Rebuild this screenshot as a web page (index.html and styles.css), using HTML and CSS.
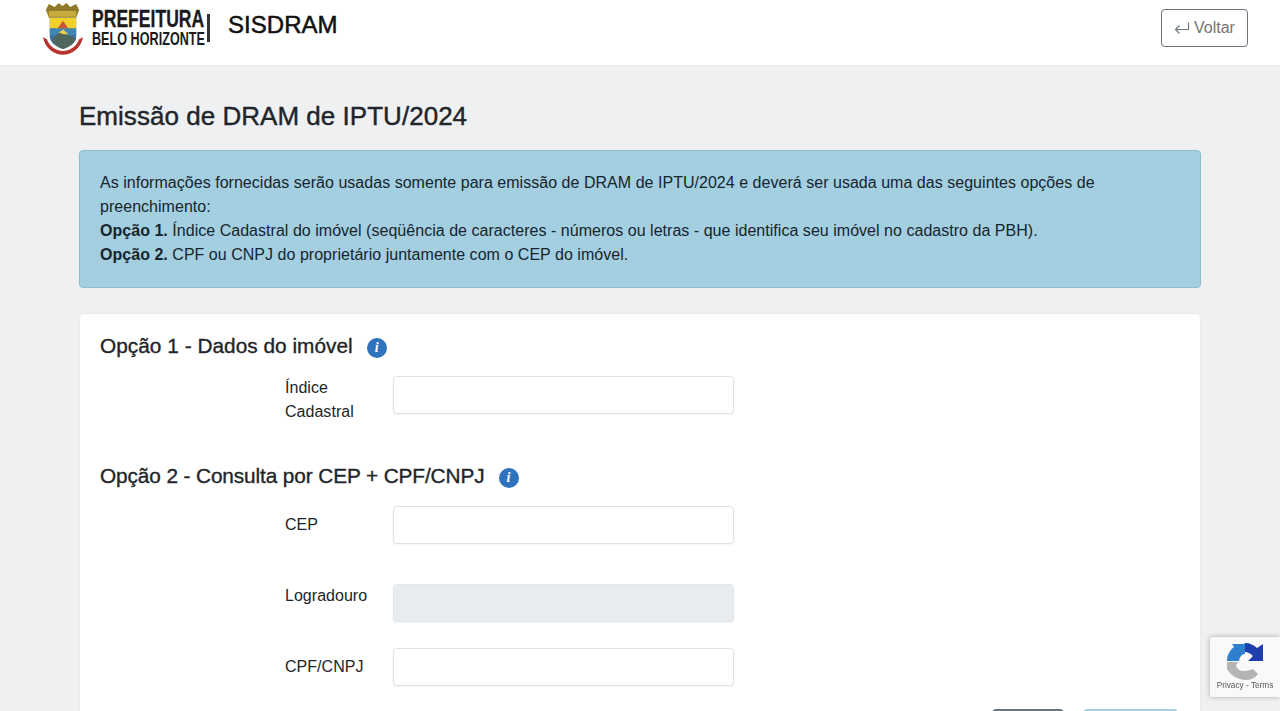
FILE: index.html
```html
<!DOCTYPE html>
<html lang="pt-BR">
<head>
<meta charset="utf-8">
<title>SISDRAM</title>
<link rel="stylesheet" href="styles.css">
</head>
<body>
<header class="topbar">
  <div class="brand">
    <svg class="crest" viewBox="0 0 42 54" width="41" height="53" aria-hidden="true">
      <path d="M4 8 L7 2 L13 5 L17 1 L21 4 L25 1 L29 5 L35 2 L38 8 L35 16 H7 Z" fill="#8f7a2a"/>
      <path d="M7 9 H35 V15 H7 Z" fill="#c7ab3c"/>
      <path d="M8 16 H35 V35 C35 42 28 46 21.500 48 C15 46 8 42 8 35 Z" fill="#3c6f9f"/>
      <path d="M8 16 H35 V27 H8 Z" fill="#f2d02c"/>
      <path d="M16 27 L21.500 19 L27 27 Z" fill="#c9523a"/>
      <path d="M8 27 H35 V34 H8 Z" fill="#3f86b5"/>
      <path d="M11 38 C16 31 21 29 24 32 C28 35 32 36 35 37 C34 42 28 46 21.500 48 C15 46 11 42 11 38 Z" fill="#50655c"/>
      <path d="M17 31 L22 28 L27 33 L22 33 Z" fill="#e8cf4a"/>
      <path d="M1 36 L5 38 C8 46 15 50 21.500 50 C28 50 35 46 38 38 L42 36 C40 47 31 54 21.500 54 C12 54 3 47 1 36 Z" fill="#b8342f"/>
    </svg>
    <div class="wordmark">
      <span class="wm-top">PREFEITURA</span>
      <span class="wm-bottom">BELO HORIZONTE</span>
    </div>
    <span class="wm-rule"></span>
    <span class="app-name">SISDRAM</span>
  </div>
  <button class="back-btn" type="button">
    <svg viewBox="0 0 16 14" width="16" height="14" aria-hidden="true"><path d="M14.500 1.500 V8.500 H1.500 M5.500 4.500 L1.500 8.500 L5.500 12.500" fill="none" stroke="#6c757d" stroke-width="1.100"/></svg>
    Voltar
  </button>
</header>

<main class="content">
  <h1 class="page-title">Emissão de DRAM de IPTU/2024</h1>
  <div class="notice">
    As informações fornecidas serão usadas somente para emissão de DRAM de IPTU/2024 e deverá ser usada uma das seguintes opções de preenchimento:<br>
    <strong>Opção 1.</strong> Índice Cadastral do imóvel (seqüência de caracteres - números ou letras - que identifica seu imóvel no cadastro da PBH).<br>
    <strong>Opção 2.</strong> CPF ou CNPJ do proprietário juntamente com o CEP do imóvel.
  </div>

  <section class="card">
    <h2 class="section-title">Opção 1 - Dados do imóvel <span class="info">i</span></h2>
    <div class="field field-first">
      <label class="field-label">Índice Cadastral</label>
      <input class="field-input" type="text">
    </div>

    <h2 class="section-title section-title-tight">Opção 2 - Consulta por CEP + CPF/CNPJ <span class="info">i</span></h2>
    <div class="field field-cep">
      <label class="field-label field-label-low">CEP</label>
      <input class="field-input" type="text">
    </div>
    <div class="field field-street">
      <label class="field-label">Logradouro</label>
      <input class="field-input" type="text" disabled>
    </div>
    <div class="field field-doc">
      <label class="field-label field-label-low">CPF/CNPJ</label>
      <input class="field-input" type="text">
    </div>
    <div class="actions">
      <button class="action action-clear" type="button"></button>
      <button class="action action-go" type="button"></button>
    </div>
  </section>
</main>

<aside class="recaptcha">
  <svg viewBox="0 0 37 37" width="37" height="37" aria-hidden="true">
    <path d="M0 18 C0 12 3 7 7 4 L5 1 L17 1 L18 0 V11 C15 11 13 13 12 18 Z" fill="#2f7fd0"/>
    <path d="M18 0 C23 0 27 2 30 5 L36 1 V18 H21 L26 13 C24 11 21 9 18 9 Z" fill="#1f3fae"/>
    <path d="M0 19 H11 L9 22 C10 26 13 28 16 28 C20 28 23 27 26 26 L31 31 C28 35 24 37 19 37 C12 37 4 33 0 26 Z" fill="#b4b4b4"/>
  </svg>
  <span class="recaptcha-text">Privacy - Terms</span>
</aside>
</body>
</html>
```
FILE: styles.css
```css
* { box-sizing: border-box; }
html, body { margin: 0; height: 711px; overflow: hidden; }
body {
  background: #eef0f2;
  color: #212529;
  font-family: "Liberation Sans", Arial, sans-serif;
  font-size: 16px;
  line-height: 24px;
  letter-spacing: .03px;
}
.topbar {
  height: 65px;
  background: #fff;
  display: flex;
  align-items: flex-start;
  justify-content: space-between;
  padding: 1px 32px 0 42px;
  box-shadow: 0 1px 2px rgba(0, 0, 0, .03);
}
.brand { display: flex; align-items: center; height: 54px; }
.crest { flex: none; }
.wordmark {
  display: flex;
  flex-direction: column;
  margin-left: 9px;
  margin-top: -2px;
  font-weight: 700;
  color: #1a1a1a;
  width: 113px;
}
.wm-top {
  display: block;
  font-size: 24px;
  line-height: 22px;
  white-space: nowrap;
  -webkit-text-stroke: .3px #1a1a1a;
  transform: scaleX(.73);
  transform-origin: left center;
}
.wm-bottom {
  display: block;
  font-size: 18px;
  line-height: 16px;
  margin-top: 1px;
  white-space: nowrap;
  transform: scaleX(.7);
  transform-origin: left center;
}
.wm-rule { width: 3px; height: 28px; background: #333; margin: 0 18px 0 2px; }
.app-name {
  font-size: 24px;
  line-height: 30px;
  color: #111;
  -webkit-text-stroke: .5px #111;
  margin-top: -7px;
}
.back-btn {
  width: 87px;
  height: 38px;
  margin-top: 8px;
  display: flex;
  align-items: center;
  justify-content: center;
  gap: 4px;
  padding: 0;
  background: #fff;
  border: 1px solid #6c757d;
  border-radius: 4px;
  color: #6c757d;
  font: 16px/24px "Liberation Sans", Arial, sans-serif;
}
.content { width: 1122px; margin-left: 79px; }
.page-title {
  margin: 35px 0 18px;
  font-size: 26px;
  line-height: 32px;
  font-weight: 400;
  -webkit-text-stroke: .4px #212529;
}
.notice {
  height: 138px;
  padding: 20px;
  background: #a3cfe0;
  border: 1px solid #8fbccd;
  border-radius: 4px;
  color: #16252e;
  margin-bottom: 25px;
}
.card {
  background: #fff;
  border: 1px solid #e8eaec;
  border-radius: 4px;
  padding: 20px;
  height: 460px;
}
.section-title {
  margin: 0;
  font-size: 20.800px;
  line-height: 24px;
  font-weight: 400;
  -webkit-text-stroke: .35px #212529;
  display: flex;
  align-items: center;
}
.section-title-tight { letter-spacing: -.11px; }
.info {
  display: inline-flex;
  width: 20px;
  height: 20px;
  margin-left: 14px;
  margin-top: 4px;
  align-items: center;
  justify-content: center;
  border-radius: 50%;
  background: #2f72bd;
  color: #fff;
  font: italic 700 14px/20px "Liberation Serif", serif;
  -webkit-text-stroke: 0;
}
.field { display: flex; align-items: flex-start; margin-left: 185px; }
.field-first { margin-top: 18px; height: 88px; }
.field-cep { margin-top: 18px; height: 78px; }
.field-street { height: 64px; }
.field-doc { height: 61px; }
.field-label { width: 108px; flex: none; }
.field-label-low { padding-top: 7px; }
.field-input {
  width: 341px;
  height: 38px;
  padding: 6px 12px;
  border: 1px solid #dfe2e5;
  border-radius: 4px;
  background: #fff;
  box-shadow: 0 1px 2px rgba(0, 0, 0, .05);
  outline: none;
}
.field-input:disabled { background: #e9ecef; border-color: #e4e7ea; }
.actions { display: flex; justify-content: flex-end; gap: 19px; margin-right: 2px; }
.action {
  width: 72px;
  height: 38px;
  border-radius: 4px;
  border: 1px solid #6c757d;
  background: #6c757d;
}
.action-go { width: 95px; background: #a3cfe0; border-color: #a3cfe0; }
.recaptcha {
  position: fixed;
  right: 0;
  top: 637px;
  width: 70px;
  height: 60px;
  background: #f9f9f9;
  box-shadow: 0 0 5px rgba(0, 0, 0, .3);
  border-radius: 2px 0 0 2px;
  display: flex;
  flex-direction: column;
  align-items: center;
}
.recaptcha svg { margin-top: 6px; }
.recaptcha-text { font-size: 8.200px; line-height: 10px; color: #555; white-space: nowrap; margin-top: 1px; }
```
